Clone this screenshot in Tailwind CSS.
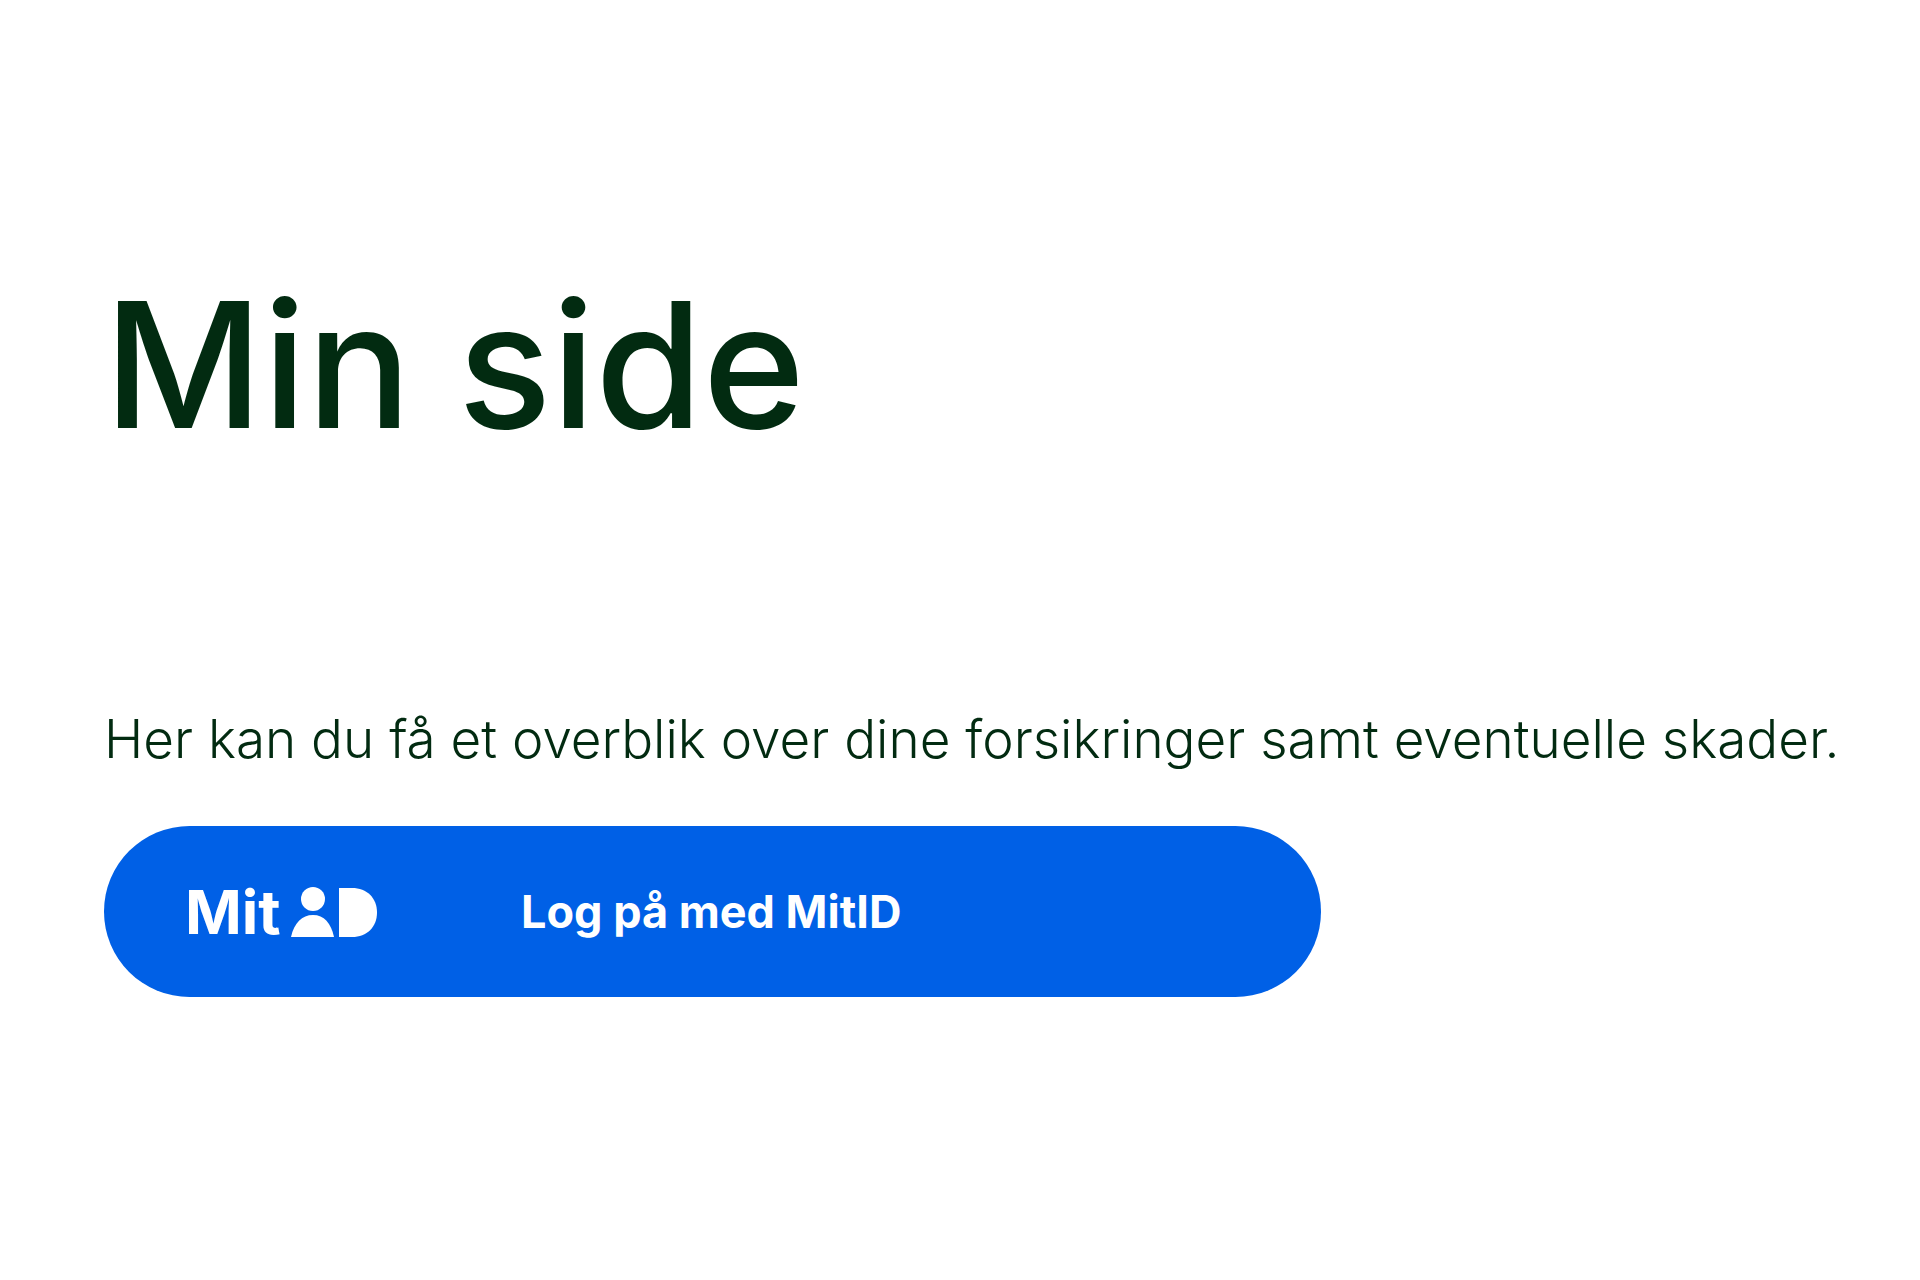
<!DOCTYPE html>
<html lang="da">
  <head>
    <meta charset="UTF-8" />
    <meta name="viewport" content="width=device-width, initial-scale=1.0" />
    <script src="https://cdn.jsdelivr.net/npm/@tailwindcss/browser@4"></script>
    <title>Min side</title>
  </head>
  <body class="bg-white font-['Inter',sans-serif] text-[#022b11]">
    <main class="min-h-screen w-full pl-[104px] pr-16 pt-[265px] pb-24">
      <h1 class="text-[174px] leading-[200px] font-medium">Min side</h1>
      <p class="mt-[234px] text-[53px] leading-[80px] font-light">
        Her kan du få et overblik over dine forsikringer samt eventuelle skader.
      </p>
      <button
        type="button"
        class="mt-[47px] w-full max-w-[1217px] h-[171px] pl-[81px] flex items-center rounded-full bg-[#0060e6] hover:bg-[#0052c7] text-white font-bold text-left cursor-pointer"
      >
        <!-- MitID logo -->
        <span class="w-[192px] shrink-0 flex items-center justify-between">
          <span class="text-[61px] leading-[64px]">Mit</span>
          <svg class="w-[86px] h-[50px] shrink-0" viewBox="0 0 86 50" fill="currentColor" aria-hidden="true">
            <circle cx="22" cy="12" r="12" />
            <path d="M0 50C3 36 11 28 22 28S40 36 43 50Z" />
            <path d="M48 1H61C76 1 86 11 86 25.500S76 50 61 50H48Z" />
          </svg>
        </span>
        <span class="ml-36 text-[45px] leading-[56px]">Log på med MitID</span>
      </button>
    </main>
  </body>
</html>
